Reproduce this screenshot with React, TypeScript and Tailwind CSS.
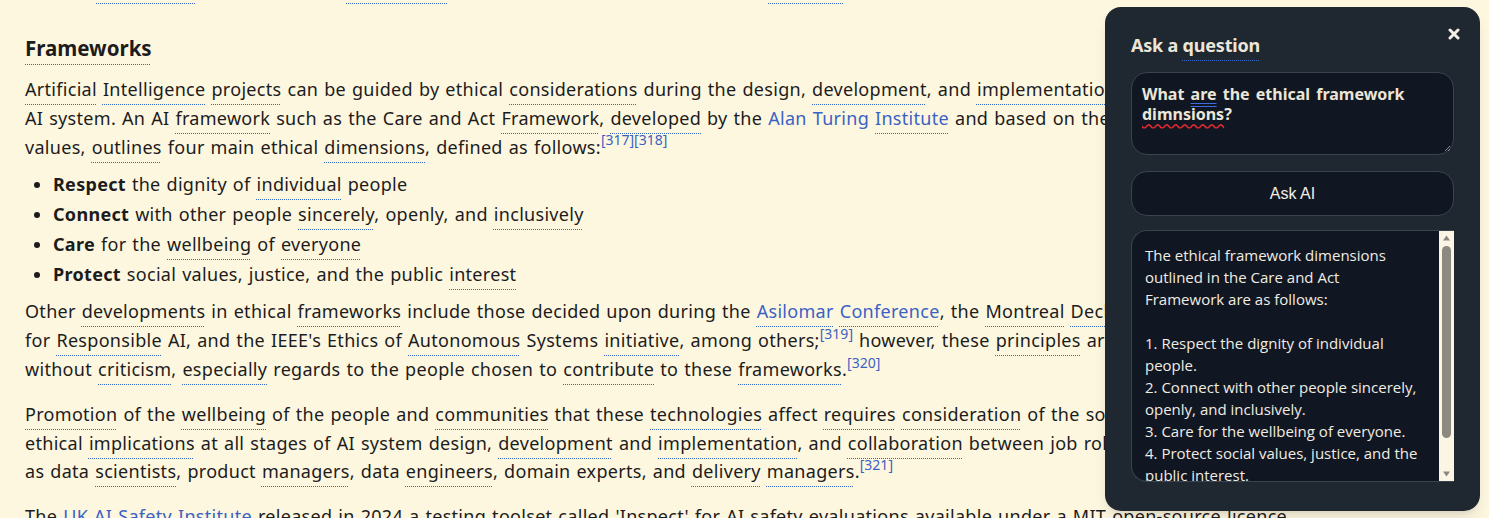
import React from "react";

const body = "font-['Noto_Sans',sans-serif]";

function U({ children }: { children: React.ReactNode }) {
  return (
    <span className="underline decoration-dotted decoration-[#3366cc] decoration-1 underline-offset-[8px] [text-decoration-skip-ink:none]">
      {children}
    </span>
  );
}

function A({ children, u }: { children: React.ReactNode; u?: boolean }) {
  return u ? (
    <span className="text-[#3a62c4] underline decoration-dotted decoration-[#3366cc] decoration-1 underline-offset-[8px] [text-decoration-skip-ink:none]">
      {children}
    </span>
  ) : (
    <span className="text-[#3a62c4]">{children}</span>
  );
}

function Sup({ children }: { children: React.ReactNode }) {
  return <sup className="-top-[0.6em] text-[14px] tracking-normal text-[#3a62c4]">{children}</sup>;
}

function Line({ children }: { children: React.ReactNode }) {
  return <div className="whitespace-nowrap">{children}</div>;
}

function Article() {
  return (
    <div
      className={`${body} pl-[25px] text-[18px] leading-[28.8px] tracking-[0.3px] text-[#1c1c1c] [word-spacing:1px]`}
    >
      {/* tail of the previous paragraph, only its underlines show */}
      <div className="flex h-[4px]">
        <span className="ml-[71px] w-[99px] border-b border-dotted border-[#3366cc]" />
        <span className="ml-[151px] w-[101px] border-b border-dotted border-[#3366cc]" />
        <span className="ml-[321px] w-[75px] border-b border-dotted border-[#3366cc]" />
      </div>

      <h2 className="mt-[30px] text-[20.5px] font-bold leading-[28px] tracking-normal">
        <U>Frameworks</U>
      </h2>

      <p className="mt-[13px]">
        <Line>
          <U>Artificial</U> <U>Intelligence</U> <U>projects</U> can be guided by ethical{" "}
          <U>considerations</U> during the design, <U>development</U>, and <U>implementation</U> of an
        </Line>
        <Line>
          AI system. An AI <U>framework</U> such as the Care and Act <U>Framework</U>, <U>developed</U> by
          the <A>Alan Turing</A> <A u>Institute</A> and based on the SUM
        </Line>
        <Line>
          values, <U>outlines</U> four main ethical <U>dimensions</U>, defined as follows:
          <Sup>[317][318]</Sup>
        </Line>
      </p>

      <ul className="mt-[8px] list-disc pl-[28px] leading-[30px]">
        <li>
          <b>Respect</b> the dignity of <U>individual</U> people
        </li>
        <li>
          <b>Connect</b> with other people <U>sincerely</U>, openly, and <U>inclusively</U>
        </li>
        <li>
          <b>Care</b> for the <U>wellbeing</U> of <U>everyone</U>
        </li>
        <li>
          <b>Protect</b> social values, justice, and the public <U>interest</U>
        </li>
      </ul>

      <p className="mt-[8px]">
        <Line>
          Other <U>developments</U> in ethical <U>frameworks</U> include those decided upon during the{" "}
          <A u>Asilomar</A> <A u>Conference</A>, the <U>Montreal</U> <U>Declaration</U>
        </Line>
        <Line>
          for <U>Responsible</U> AI, and the IEEE's Ethics of <U>Autonomous</U> Systems <U>initiative</U>,
          among others;<Sup>[319]</Sup> however, these <U>principles</U> are not
        </Line>
        <Line>
          without <U>criticism</U>, <U>especially</U> regards to the people chosen to <U>contribute</U> to
          these <U>frameworks</U>.<Sup>[320]</Sup>
        </Line>
      </p>

      <p className="mt-[16px]">
        <Line>
          <U>Promotion</U> of the <U>wellbeing</U> of the people and <U>communities</U> that these{" "}
          <U>technologies</U> affect <U>requires</U> <U>consideration</U> of the social and
        </Line>
        <Line>
          ethical <U>implications</U> at all stages of AI system design, <U>development</U> and{" "}
          <U>implementation</U>, and <U>collaboration</U> between job roles such
        </Line>
        <Line>
          as data <U>scientists</U>, product <U>managers</U>, data <U>engineers</U>, domain experts, and{" "}
          <U>delivery</U> <U>managers</U>.<Sup>[321]</Sup>
        </Line>
      </p>

      <p className="mt-[16px]">
        <Line>
          The <A u>UK AI Safety Institute</A> released in 2024 a testing toolset called 'Inspect' for AI
          safety evaluations available under a MIT open-source licence
        </Line>
      </p>
    </div>
  );
}

const answer = `The ethical framework dimensions
outlined in the Care and Act
Framework are as follows:

1. Respect the dignity of individual
people.
2. Connect with other people sincerely,
openly, and inclusively.
3. Care for the wellbeing of everyone.
4. Protect social values, justice, and the
public interest.`;

function AskPanel() {
  return (
    <div className="absolute right-[9px] top-[7px] flex h-[504px] w-[375px] flex-col rounded-2xl bg-[#1f2731] px-[26px] pt-[24px] shadow-lg">
      <button className="absolute right-[20px] top-[21px] text-[#f3f0e6]">
        <svg width="12" height="12" viewBox="0 0 12 12">
          <path d="M2 2 L10 10 M10 2 L2 10" stroke="currentColor" strokeWidth="3" strokeLinecap="round" />
        </svg>
      </button>

      <h3 className={`${body} text-[18px] font-bold leading-[28px] tracking-[-0.2px] text-[#ebe6d8]`}>
        Ask a <U>question</U>
      </h3>

      <div className="relative mt-[13px] h-[83px] rounded-2xl border border-[#3a4350] bg-[#111722] px-[10px] pt-[11px]">
        <p className={`${body} text-[16px] font-bold leading-[20px] text-[#ebe6d8] [word-spacing:2px]`}>
          What{" "}
          <span className="underline decoration-double decoration-[#3d6be0] underline-offset-[3px]">are</span>{" "}
          the ethical framework{" "}
          <span className="underline decoration-wavy decoration-[#e0282e] underline-offset-[3px] [text-decoration-skip-ink:none]">
            dimnsions
          </span>
          ?
        </p>
        <svg className="absolute bottom-[2px] right-[2px]" width="8" height="8" viewBox="0 0 8 8">
          <path d="M7 2 L2 7 M7 5 L5 7" stroke="#8a8f98" strokeWidth="1" />
        </svg>
      </div>

      <button className="mt-[16px] h-[45px] rounded-2xl border border-[#3a4350] bg-[#111722] font-['Liberation_Sans',sans-serif] text-[16px] text-[#f3f0e6]">
        Ask AI
      </button>

      <div className="mt-[14px] flex h-[252px] overflow-hidden rounded-l-2xl border border-r-0 border-[#3a4350] bg-[#111722]">
        <div className="flex-1 overflow-hidden whitespace-pre pl-[13px] pt-[13px] font-['Open_Sans',sans-serif] text-[15px] leading-[22px] text-[#f0ece2]">
          {answer}
        </div>
        <div className="flex w-[15px] flex-col items-center bg-[#fbf5e3] py-[3px]">
          <svg width="9" height="8" viewBox="0 0 9 8">
            <path d="M4.5 1.5 L8 6.5 L1 6.5 Z" fill="#8c8a80" />
          </svg>
          <div className="mt-[4px] h-[192px] w-[9px] rounded-full bg-[#8c8a80]" />
          <div className="flex-1" />
          <svg width="9" height="8" viewBox="0 0 9 8">
            <path d="M1 1.5 L8 1.5 L4.5 6.5 Z" fill="#8c8a80" />
          </svg>
        </div>
      </div>
    </div>
  );
}

export default function App() {
  return (
    <div className="relative h-[518px] overflow-hidden bg-[#fef7e0]">
      <Article />
      <AskPanel />
    </div>
  );
}
